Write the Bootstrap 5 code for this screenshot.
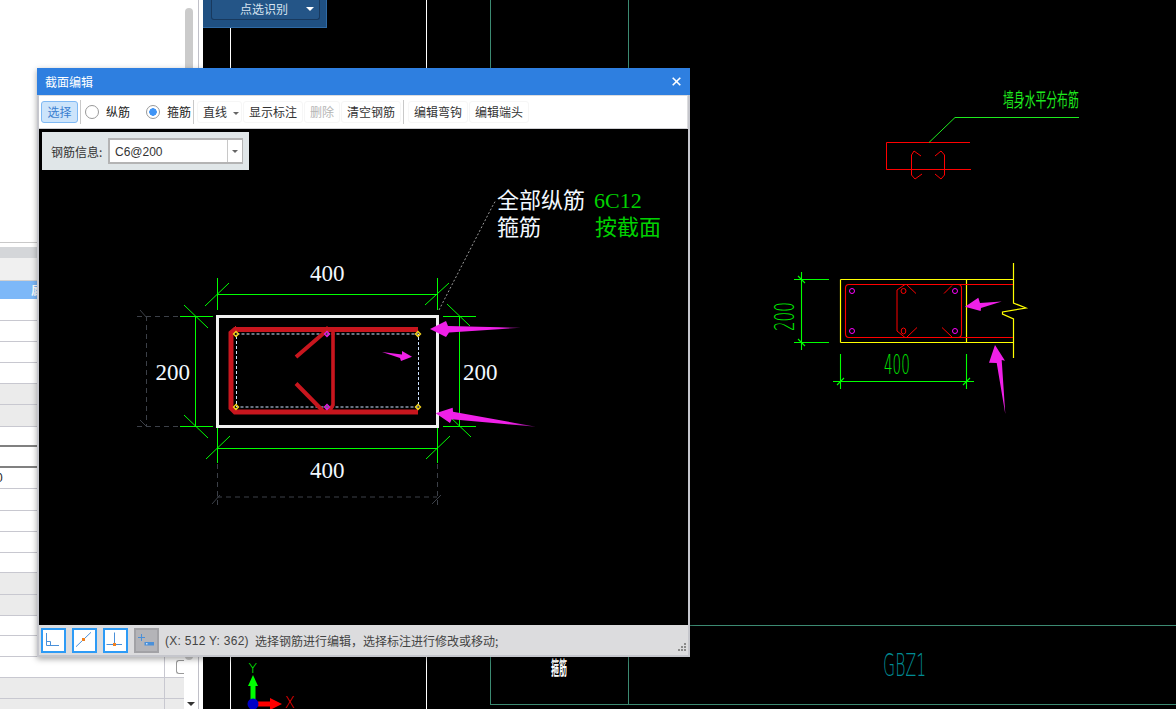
<!DOCTYPE html>
<html lang="zh-CN">
<head>
  <meta charset="UTF-8" />
  <title>截面编辑</title>
  <link href="https://cdn.jsdelivr.net/npm/bootstrap@5.3.0/dist/css/bootstrap.min.css" rel="stylesheet" />
  <style>
    html, body { height: 709px; overflow: hidden; }
    body { background: #000; font-family: "Liberation Sans", "Noto Sans CJK SC", sans-serif; font-size: 12px; color: #333; }
    .cjk { font-family: "Noto Sans CJK SC", sans-serif; }

    /* left property panel */
    .side-panel { width: 203px; height: 709px; background: #fff; }
    .grid-area { width: 184px; }
    .grid-top { height: 243px; border-bottom: 1px solid #c9c9c9; margin-bottom: 4px; }
    .grid-band { height: 11px; background: #d4d6d9; }
    .grid-head { height: 23px; background: #f0f0f0; border-bottom: 1px solid #d0d0d0; }
    .grid-blue { height: 18px; background: #7db8f8; color: #fff; padding-left: 31px; line-height: 18px; font-weight: 700; }
    .grid-line { height: 21px; border-bottom: 1px solid #c8c8d0; background: #fff; }
    .grid-line.tall { height: 22px; }
    .grid-line.short { height: 20px; }
    .grid-line.shade { background: #ebebeb; }
    .grid-line.heavy { border-bottom: 2px solid #808080; }
    .cell-main { width: 165px; border-right: 1px solid #c8c8d0; overflow: hidden; line-height: 20px; }
    .cell-main span { margin-left: -4px; color: #222; }
    .cell-check { width: 19px; padding: 3px 0 0 11px; overflow: hidden; }
    .check-box { width: 9px; height: 14px; border: 1px solid #999; border-right: 0; border-radius: 3px 0 0 3px; }
    .scroll-col { width: 14px; padding: 8px 0 3px 1px; }
    .scroll-thumb { width: 8px; height: 652px; background: #cbcbcb; border-radius: 4px; }
    .scroll-arrow { width: 0; height: 0; margin-left: 2px; border: 4px solid transparent; border-top: 4px solid #333; border-bottom: 0; }
    .panel-rule { width: 1px; background: #c0c0c8; margin-right: 4px; }

    /* cad view */
    .cad-view { width: 973px; height: 709px; display: block; background: #000; }
    .top-tool { position: absolute; left: 203px; top: 0; width: 124px; height: 28px; background: #1f5082; border-right: 1px solid #2f6aa5; border-bottom: 1px solid #2f6aa5; padding: 0 6px 0 8px; }
    .top-btn { height: 20px; background: #245587; border: 1px solid #18395e; border-top: 0; border-radius: 0 0 3px 3px; color: #d8e4f0; font-size: 12px; line-height: 16px; padding: 0 0 2px 28px; }
    .top-caret { width: 0; height: 0; margin-left: 18px; border: 4px solid transparent; border-top: 4px solid #fff; border-bottom: 0; }

    /* dialog */
    .section-win { position: absolute; left: 37px; top: 68px; width: 653px; height: 589px; background: #dcdcde; border: 2px solid #c5c6cc; border-top: 0; box-shadow: 0 2px 6px rgba(0, 0, 0, .35); }
    .win-title { height: 27px; margin: 0 -2px; background: #2e7fe0; color: #fff; padding: 0 9px 0 8px; line-height: 27px; font-size: 12px; }
    .win-close { width: 9px; height: 9px; display: block; }
    .win-tools { height: 33px; margin-top: 1px; background: #fff; border-bottom: 1px solid #d0d0d4; padding: 5px 0 5px 2px; margin-right: 1px; }
    .tool-sep { width: 1px; height: 24px; background: #c9c9c9; margin: -1px 3px 0 2px; }
    .tool-sel { width: 37px; height: 22px; padding: 0; font-size: 12px; line-height: 20px; color: #3a7fd0; background: #cce4fb; border: 1px solid #7fb9f4; border-radius: 3px; }
    .tool-btn { height: 22px; padding: 0 5px; font-size: 12px; line-height: 20px; color: #333; background: #fff; border: 1px solid #f6f6f6; border-radius: 3px; margin-left: 1px; white-space: nowrap; }
    .tool-btn.off { color: #b5b5b5; }
    .tool-btn.line-btn { width: 45px; text-align: left; margin-left: 0; }
    .line-caret { display: inline-block; width: 0; height: 0; margin-left: 6px; vertical-align: 2px; border: 3px solid transparent; border-top: 3px solid #666; border-bottom: 0; }
    .radio-item { height: 22px; line-height: 22px; color: #222; }
    .radio-item.first { margin-left: 1px; }
    .radio-item.second { margin-left: 16px; }
    .radio-item .form-check-input { width: 14px; height: 14px; margin: 0 7px 0 0; border: 1px solid #999; background-image: none; flex: none; }
    .radio-item .form-check-input:checked { background-color: #fff; border-color: #999; background-image: radial-gradient(circle, #3f94f5 0 3.5px, #fff 4px); }
    .win-canvas { height: 496px; background: #000; }
    .win-canvas svg { display: block; }
    .info-bar { position: absolute; left: 3px; top: 3px; width: 207px; height: 38px; background: #e0e6e8; padding: 0 6px 0 9px; color: #333; }
    .info-label { width: 57px; padding-top: 1px; }
    .info-combo { width: 135px; height: 26px; background: #fff; border: 2px solid #b4b4b4; border-right-width: 1px; padding-left: 5px; line-height: 24px; }
    .combo-arrow { width: 15px; height: 100%; border-left: 1px solid #c8c8c8; }
    .combo-arrow i { width: 0; height: 0; border: 3px solid transparent; border-top: 3px solid #666; border-bottom: 0; }
    .win-status { height: 30px; background: #dcdcde; padding: 3px 0 2px 2px; color: #444; white-space: nowrap; }
    .snap-btn { width: 25px; height: 25px; background: #fff; border: 2px solid #2d9bf6; margin-right: 6px; padding: 0; display: block; }
    .snap-btn.off { background: #b4b4b8; border-color: #a2a2a6; }
    .status-coord { margin: 0 6px 0 0; letter-spacing: .27px; }
    .status-grip { margin-left: auto; align-self: flex-end; display: block; }
  </style>
</head>
<body class="position-relative">
  <div class="d-flex">
    <!-- left panel -->
    <div class="side-panel d-flex flex-shrink-0">
      <div class="grid-area">
        <div class="grid-top"></div>
        <div class="grid-band"></div>
        <div class="grid-head"></div>
        <div class="grid-blue cjk">属</div>
        <div class="grid-line tall d-flex"><div class="cell-main"></div></div>
        <div class="grid-line d-flex"><div class="cell-main"></div></div>
        <div class="grid-line d-flex"><div class="cell-main"></div></div>
        <div class="grid-line d-flex"><div class="cell-main"></div></div>
        <div class="grid-line shade d-flex"><div class="cell-main"></div></div>
        <div class="grid-line tall shade d-flex"><div class="cell-main"></div></div>
        <div class="grid-line short heavy d-flex"><div class="cell-main"></div></div>
        <div class="grid-line heavy d-flex"><div class="cell-main"></div></div>
        <div class="grid-line d-flex"><div class="cell-main"><span>0</span></div></div>
        <div class="grid-line tall d-flex"><div class="cell-main"></div></div>
        <div class="grid-line d-flex"><div class="cell-main"></div></div>
        <div class="grid-line d-flex"><div class="cell-main"></div></div>
        <div class="grid-line short d-flex"><div class="cell-main"></div></div>
        <div class="grid-line tall shade d-flex"><div class="cell-main"></div></div>
        <div class="grid-line shade d-flex"><div class="cell-main"></div></div>
        <div class="grid-line short d-flex"><div class="cell-main"></div></div>
        <div class="grid-line d-flex"><div class="cell-main"></div></div>
        <div class="grid-line d-flex"><div class="cell-main"></div><div class="cell-check"><div class="check-box"></div></div></div>
        <div class="grid-line shade d-flex"><div class="cell-main"></div></div>
        <div class="grid-line shade d-flex"><div class="cell-main"></div></div>
      </div>
      <div class="scroll-col d-flex flex-column justify-content-between">
        <div class="scroll-thumb"></div>
        <div class="scroll-arrow"></div>
      </div>
      <div class="panel-rule"></div>
    </div>

    <!-- drawing behind the dialog -->
    <svg class="cad-view flex-shrink-0" viewBox="203 0 973 709" xmlns="http://www.w3.org/2000/svg">
      <g stroke-width="1" fill="none">
        <path d="M230.5 28V709M426.5 657V709" stroke="#fff" />
        <path d="M426.5 0V68" stroke="#fff" />
        <path d="M490.5 0V68M628.5 0V625M490.5 657V704.5M628.5 657V704.5M690 625.5H1176M490 704.5H1176" stroke="#3c8a72" />
      </g>

      <!-- wall detail, top right -->
      <path d="M970 142.5H886.5V169.5H971" fill="none" stroke="#f00" stroke-width="1" />
      <path d="M921 156L914 151L911.5 155V175L915 179L922 174M935 156L941 151L944.5 155V175L941 179L935 174" fill="none" stroke="#f00" />
      <path d="M929 142.5L955 117.5H1079" fill="none" stroke="#1eea1e" />
      <text class="cjk" transform="translate(1003 107) scale(.57 1)" font-size="19" fill="#1eea1e">墙身水平分布筋</text>

      <!-- column section -->
      <path d="M840.5 279.5H1013.5M840.5 342.5H1013.5M840.5 279.5V342.5M966.5 279.5V342.5" fill="none" stroke="#ff0" stroke-width="1.2" />
      <path d="M1013.5 263V303L1026 308L1002.5 312V314L1013.5 319V358" fill="none" stroke="#ff0" stroke-width="1.2" />
      <path d="M1013 284.5H849Q845.5 284.5 845.5 288V333.5Q845.5 337.5 849 337.5H1013M950 284.5H958Q961.5 284.5 961.5 288V333.5Q961.5 337.5 958 337.5" fill="none" stroke="#f00" stroke-width="1.1" />
      <path d="M905 284.5L897 290V331L905 337.5M907 285L916 293.5M907 337L917 327.5M944 293.5L952 285.5M942 327.5L952 337" fill="none" stroke="#f00" />
      <g fill="none" stroke="#f0f">
        <circle cx="852" cy="291" r="2.5" /><circle cx="852" cy="331" r="2.5" />
        <circle cx="955" cy="291" r="2.5" /><circle cx="955" cy="331" r="2.5" />
      </g>
      <g fill="none" stroke="#f00">
        <circle cx="903.5" cy="291" r="2.5" /><ellipse cx="903.5" cy="331" rx="2.3" ry="3" />
      </g>
      <path d="M801.5 272V350M794 279.5H829M794 342.5H829M833 381.5H974M840.5 354V389M966.5 354V389M798 276L805 283M798 339L805 346M837 385L844 378M963 385L970 378" fill="none" stroke="#0f0" stroke-width="1.1" />
      <text transform="translate(794 331) rotate(-90) scale(.56 1)" font-family="DejaVu Sans" font-weight="200" font-size="27" fill="#0e0">200</text>
      <text transform="translate(884 374) scale(.5 1)" font-family="DejaVu Sans" font-weight="200" font-size="27" fill="#0e0">400</text>
      <polygon points="965,306.7 978.3,297.7 980,303 1001.7,301.5 981,308 980.7,311" fill="#f020e8" />
      <polygon points="995,345 1005,360.7 1001.7,360 1005.3,414 996.7,363 989,362.7" fill="#f020e8" />

      <!-- bottom strip -->
      <text class="cjk" transform="translate(551 675) scale(.42 1)" font-size="19" font-weight="700" fill="#fff">箍筋</text>
      <text transform="translate(883 676) scale(.49 1)" font-family="DejaVu Sans" font-weight="200" font-size="32" fill="#008b94">GBZ1</text>

      <!-- axis -->
      <rect x="250.5" y="686" width="5" height="14" fill="#0f0" />
      <polygon points="253,675 258,686 248,686" fill="#0f0" />
      <rect x="258" y="701.5" width="13" height="5" fill="#f00" />
      <polygon points="282,704 270,698 270,710" fill="#f00" />
      <circle cx="253" cy="704" r="5.5" fill="#0000c8" />
      <text x="248.5" y="673" font-family="DejaVu Sans" font-weight="200" font-size="14" fill="#0f0">Y</text>
      <text x="284.5" y="708" font-family="DejaVu Sans" font-weight="200" font-size="15" fill="#f00">X</text>
    </svg>
  </div>

  <!-- ribbon piece above the drawing -->
  <div class="top-tool">
    <div class="top-btn cjk d-flex align-items-center">点选识别<span class="top-caret"></span></div>
  </div>

  <!-- dialog -->
  <div class="section-win d-flex flex-column">
    <div class="win-title d-flex align-items-center justify-content-between">
      <span class="cjk">截面编辑</span>
      <svg class="win-close" viewBox="0 0 9 9"><path d="M.7.7L8.3 8.3M8.3.7L.7 8.3" stroke="#fff" stroke-width="1.6" /></svg>
    </div>

    <div class="win-tools d-flex align-items-center cjk">
      <button type="button" class="btn tool-sel">选择</button>
      <div class="tool-sep"></div>
      <label class="radio-item first d-flex align-items-center"><input class="form-check-input" type="radio" name="barType" />纵筋</label>
      <label class="radio-item second d-flex align-items-center"><input class="form-check-input" type="radio" name="barType" checked />箍筋</label>
      <div class="tool-sep"></div>
      <button type="button" class="btn tool-btn line-btn">直线<span class="line-caret"></span></button>
      <button type="button" class="btn tool-btn">显示标注</button>
      <button type="button" class="btn tool-btn off">删除</button>
      <button type="button" class="btn tool-btn">清空钢筋</button>
      <div class="tool-sep"></div>
      <button type="button" class="btn tool-btn">编辑弯钩</button>
      <button type="button" class="btn tool-btn">编辑端头</button>
    </div>

    <div class="win-canvas position-relative">
      <svg width="649" height="496" viewBox="39 129 649 496" xmlns="http://www.w3.org/2000/svg">
        <defs>
          <linearGradient id="tailA" x1="0" x2="1" y1="0" y2="0">
            <stop offset=".75" stop-color="#f020e8" /><stop offset="1" stop-color="#701070" />
          </linearGradient>
        </defs>

        <!-- grey construction dims -->
        <path d="M146.5 316V426M137 316.5H180M137 426.5H180M217.5 464V507M437.5 464V507M217 497H437" fill="none" stroke="#3c4048" stroke-dasharray="5 4" />
        <path d="M140 310L147 318M140 420L147 427M212 504L220 495M432 504L441 495" fill="none" stroke="#3c4048" />

        <!-- green dims -->
        <path d="M217 294.5H437.5M217.5 278V310M437.5 278V310M205 306L229 283M425 305L449 283
                 M195.5 316V426M180 316.5H213M180 426.5H213M184 305L208 328M184 415L208 438
                 M459.5 316V426M443 316.5H476M443 426.5H476M447 304L470 326M448 415L471 437
                 M217 448.5H437.5M217.5 428V463M437.5 428V463M206 459L230 436M426 459L450 436" fill="none" stroke="#0f0" />

        <!-- section outline -->
        <rect x="217.5" y="316.5" width="220" height="110" fill="none" stroke="#f0f0f0" stroke-width="3" />

        <!-- inner dashed line -->
        <rect x="236.5" y="334" width="182" height="73" fill="none" stroke="#cfe3ff" stroke-dasharray="3 2" />

        <!-- stirrups -->
        <path d="M418 329.5H235L231 333V408L235 412H418" fill="none" stroke="#c8161e" stroke-width="5" />
        <path d="M333 329V405L329 412" fill="none" stroke="#c8161e" stroke-width="3.6" />
        <path d="M325 332L296 357M296 383.5L323 411" fill="none" stroke="#c8161e" stroke-width="4" />
        <path d="M235.5 326V329M327 326V329" stroke="#c8161e" />

        <!-- bar nodes -->
        <g fill="none" stroke="#f2d21e" stroke-width="1.4">
          <path d="M236 331.5L238.5 334L236 336.5L233.5 334Z" /><path d="M418 331.5L420.5 334L418 336.5L415.5 334Z" />
          <path d="M236 404.5L238.5 407L236 409.5L233.5 407Z" /><path d="M418 404.5L420.5 407L418 409.5L415.5 407Z" />
        </g>
        <g fill="none" stroke="#e020e0" stroke-width="1.4">
          <path d="M327 331.5L329.5 334L327 336.5L324.5 334Z" /><path d="M327 404.5L329.5 407L327 409.5L324.5 407Z" />
        </g>

        <!-- arrows -->
        <polygon points="430,329 446,321 448,326 521,327.7 449,332.5 446,337" fill="url(#tailA)" />
        <polygon points="435.7,413.3 452.7,407.7 453,411.7 536,426.7 451.7,419.3 450,423" fill="url(#tailA)" />
        <polygon points="382,352 402,354.5 402,351 412,356.7 401,361 400,358" fill="#f020e8" />

        <!-- leader -->
        <path d="M439 310L492 207L496 200" fill="none" stroke="#9a9a9a" stroke-dasharray="2 2" />

        <!-- dim text -->
        <g font-family="Liberation Serif" font-size="23" fill="#f2f8ff">
          <text x="310" y="281">400</text>
          <text x="310" y="478">400</text>
          <text x="155.5" y="380">200</text>
          <text x="463" y="380">200</text>
        </g>
        <g class="cjk" font-size="22" fill="#f2f8ff">
          <text x="497" y="208">全部纵筋</text>
          <text x="497" y="235">箍筋</text>
        </g>
        <text x="594" y="208" font-family="Liberation Serif" font-size="22" fill="#00d200">6C12</text>
        <text class="cjk" x="595" y="235" font-size="22" fill="#00d200">按截面</text>
      </svg>

      <div class="info-bar d-flex align-items-center">
        <div class="info-label cjk">钢筋信息:</div>
        <div class="info-combo d-flex justify-content-between">
          <span>C6@200</span>
          <span class="combo-arrow d-flex align-items-center justify-content-center"><i></i></span>
        </div>
      </div>
    </div>

    <div class="win-status d-flex align-items-center">
      <button type="button" class="snap-btn">
        <svg width="21" height="21" viewBox="2 2 21 21"><path d="M5.5 5V17.5H18M5.5 13.5H9.5V17.5" fill="none" stroke="#4a90d9" /></svg>
      </button>
      <button type="button" class="snap-btn">
        <svg width="21" height="21" viewBox="2 2 21 21"><path d="M4 18.7L19 4.3" stroke="#4a90d9" /><rect x="10" y="10" width="3" height="3" fill="#f08020" /></svg>
      </button>
      <button type="button" class="snap-btn">
        <svg width="21" height="21" viewBox="2 2 21 21"><path d="M11.5 4.5V16.5M3.5 16.5H19" fill="none" stroke="#4a90d9" /><rect x="10" y="15" width="3" height="3" fill="#f08020" /></svg>
      </button>
      <button type="button" class="snap-btn off">
        <svg width="21" height="21" viewBox="2 2 21 21"><path d="M7.5 6V13M4 9.5H11" fill="none" stroke="#4a90d9" /><rect x="10.5" y="14" width="9.5" height="3.5" fill="#4a90d9" /><rect x="12" y="15" width="1.5" height="1.5" fill="#cfe0f4" /></svg>
      </button>
      <span class="status-coord">(X: 512 Y: 362)</span>
      <span class="cjk">选择钢筋进行编辑，选择标注进行修改或移动;</span>
      <svg class="status-grip" width="11" height="11" viewBox="0 0 11 11"><path d="M7 1h2v2H7zM4 4h2v2H4zM7 4h2v2H7zM1 7h2v2H1zM4 7h2v2H4zM7 7h2v2H7z" fill="#8a8a8a" /></svg>
    </div>
  </div>
  <script src="https://cdn.jsdelivr.net/npm/bootstrap@5.3.0/dist/js/bootstrap.bundle.min.js"></script>
</body>
</html>
